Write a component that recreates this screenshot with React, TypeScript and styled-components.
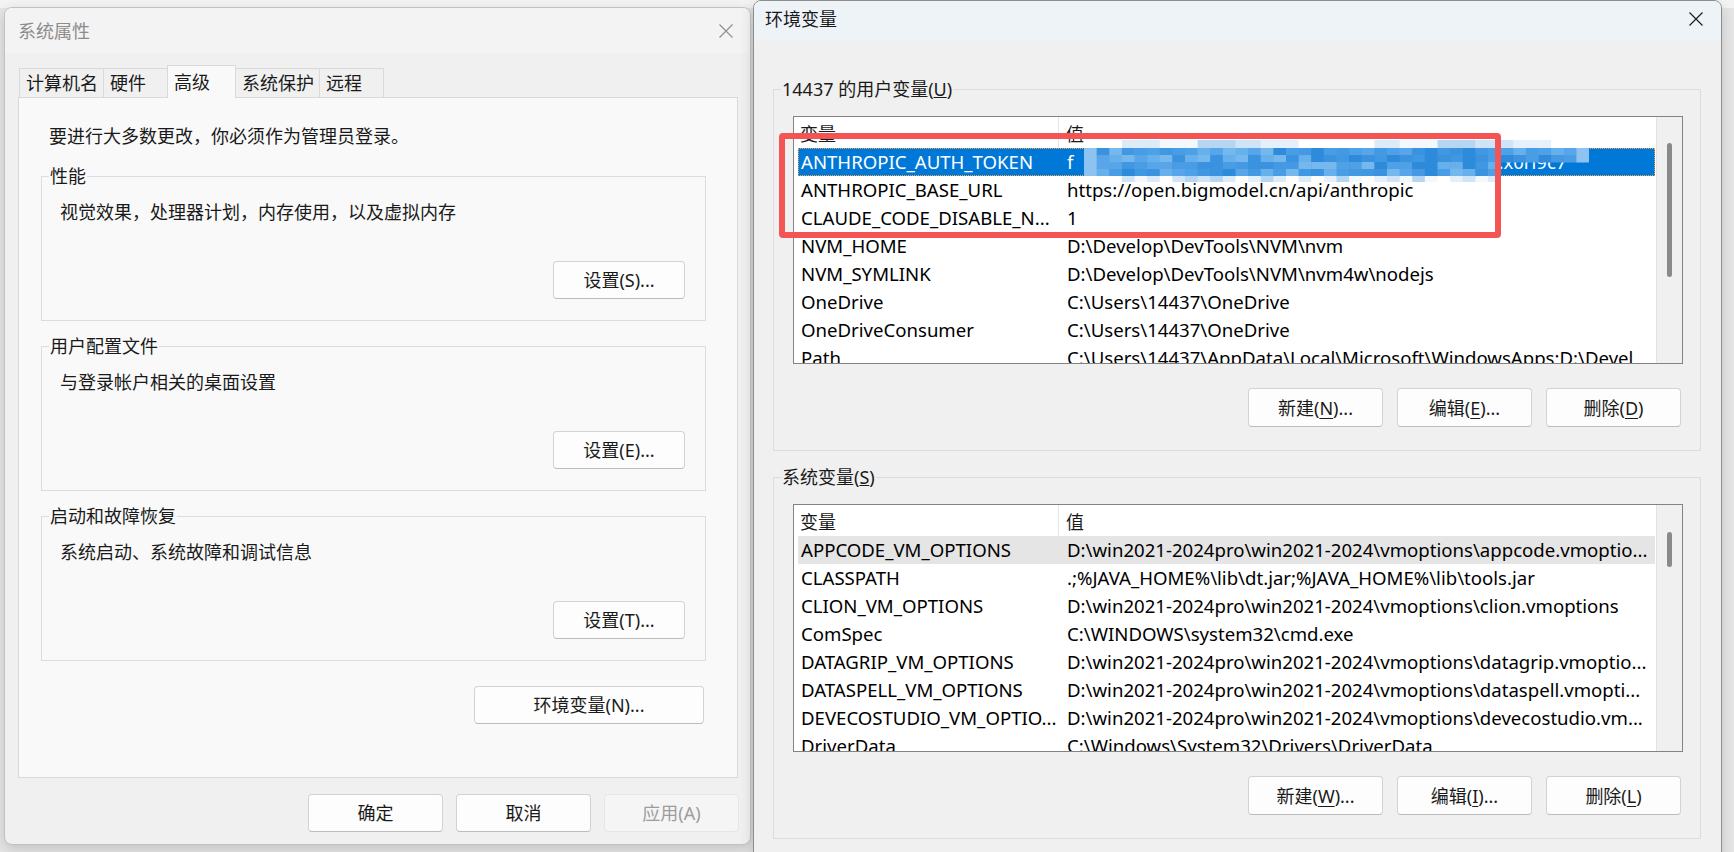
import React from 'react';
import styled, { createGlobalStyle } from 'styled-components';

type EnvVar = { name: string; value: React.ReactNode };

const GlobalStyle = createGlobalStyle`
  html, body {
    margin: 0;
    padding: 0;
  }
  body {
    width: 1734px;
    height: 852px;
    overflow: hidden;
    background: #e6e6e6;
    font-family: "Noto Sans", "Noto Sans CJK SC", sans-serif;
    font-size: 18px;
    color: #1a1a1a;
  }
`;

const Desktop = styled.div`
  display: flex;
  align-items: flex-start;
  gap: 2px;
  height: 852px;
  padding-left: 4px;
  box-sizing: border-box;
  background: linear-gradient(#f4f4f4 0, #f4f4f4 8px, #e6e6e6 8px);
`;

const Window = styled.div<{ $active?: boolean }>`
  box-sizing: border-box;
  display: flex;
  flex-direction: column;
  flex: none;
  background: #f0f0f0;
  border: 1px solid ${(p) => (p.$active ? '#8d8d8d' : '#c2c2c2')};
  overflow: hidden;
  box-shadow: 0 4px 14px rgba(0, 0, 0, 0.16);
`;

const SystemWindow = styled(Window)`
  width: 747px;
  height: 838px;
  margin-top: 7px;
  border-radius: 8px;
`;

const EnvWindow = styled(Window)`
  width: 969px;
  height: 900px;
  border-radius: 8px 8px 0 0;
`;

const TitleBar = styled.div<{ $active?: boolean }>`
  display: flex;
  align-items: center;
  justify-content: space-between;
  flex: none;
  box-sizing: border-box;
  height: ${(p) => (p.$active ? 40 : 45)}px;
  padding: ${(p) => (p.$active ? '0 0 5px 11px' : '0 0 0 13px')};
  background: ${(p) => (p.$active ? '#eef3f8' : '#f3f3f3')};
  color: ${(p) => (p.$active ? '#1a1a1a' : '#8c8c8c')};
  line-height: 24px;
`;

const CloseButton = styled.div<{ $active?: boolean }>`
  display: flex;
  align-items: center;
  justify-content: center;
  width: ${(p) => (p.$active ? 50 : 48)}px;
  height: 100%;
  color: ${(p) => (p.$active ? '#1c1c1c' : '#8f8f8f')};
`;

const SystemBody = styled.div`
  display: flex;
  flex-direction: column;
  padding: 12px 12px 0 13px;
`;

const TabStrip = styled.div`
  display: flex;
  align-items: flex-end;
  height: 32px;
  padding-left: 1px;
`;

const Tab = styled.div<{ $selected?: boolean }>`
  box-sizing: border-box;
  display: flex;
  align-items: center;
  min-width: ${(p) => (p.$selected ? 69 : 65)}px;
  height: ${(p) => (p.$selected ? 33 : 29)}px;
  margin-bottom: ${(p) => (p.$selected ? -1 : 0)}px;
  padding: 0 5px 0 6px;
  border: 1px solid #d9d9d9;
  border-bottom: none;
  background: ${(p) => (p.$selected ? '#f9f9f9' : '#f0f0f0')};
  position: relative;
  z-index: ${(p) => (p.$selected ? 2 : 1)};
  line-height: 24px;
  & + & {
    margin-left: -1px;
  }
`;

const TabPanel = styled.div`
  box-sizing: border-box;
  display: flex;
  flex-direction: column;
  height: 681px;
  border: 1px solid #d9d9d9;
  background: #f9f9f9;
  padding: 26px 31px 0 22px;
`;

const Intro = styled.div`
  padding-left: 8px;
  line-height: 24px;
`;

const GroupBox = styled.fieldset<{ $gap: number }>`
  margin: ${(p) => p.$gap}px 0 0;
  min-width: 0;
  border: 1px solid #dcdcdc;
  padding: 0 20px 21px 7px;
`;

const EnvGroupBox = styled(GroupBox)`
  padding: 0 17px 23px 7px;
`;

const Caption = styled.legend`
  padding: 0 1px;
  line-height: 24px;
`;

const GroupText = styled.div`
  margin-top: 12px;
  padding-left: 11px;
  line-height: 24px;
`;

const ButtonRow = styled.div<{ $gap?: number; $top: number; $right?: number }>`
  display: flex;
  justify-content: flex-end;
  gap: ${(p) => p.$gap ?? 0}px;
  margin-top: ${(p) => p.$top}px;
  padding-right: ${(p) => p.$right ?? 0}px;
`;

const PushButton = styled.button<{ $width: number; $height?: number }>`
  box-sizing: border-box;
  width: ${(p) => p.$width}px;
  height: ${(p) => p.$height ?? 38}px;
  padding: 0;
  border: 1px solid #d3d3d3;
  border-bottom-color: #bcbcbc;
  border-radius: 4px;
  background: #fdfdfd;
  font: inherit;
  line-height: 24px;
  color: #1a1a1a;

  &:disabled {
    background: #f5f5f5;
    border-color: #e6e6e6;
    color: #9d9d9d;
  }

  u {
    text-underline-offset: 3px;
  }
`;

const DialogFooter = styled.div`
  display: flex;
  justify-content: flex-end;
  gap: 13px;
  margin: 16px -1px 0 0;
`;

const EnvBody = styled.div`
  display: flex;
  flex-direction: column;
  padding: 36px 20px 0 19px;
`;

const ListFrame = styled.div`
  position: relative;
  display: flex;
  box-sizing: border-box;
  height: 248px;
  margin: 15px 0 0 12px;
  border: 1px solid #838383;
  background: #fff;
`;

const ListViewport = styled.div`
  flex: 1;
  min-width: 0;
  display: flex;
  flex-direction: column;
  overflow: hidden;
  padding: 0 1px 0 4px;
`;

const HeaderRow = styled.div`
  display: flex;
  flex: none;
  height: 31px;
  line-height: 24px;
`;

const HeaderCell = styled.div<{ $first?: boolean }>`
  box-sizing: border-box;
  display: flex;
  align-items: center;
  padding: 3px 0 0 ${(p) => (p.$first ? 2 : 7)}px;
  ${(p) => (p.$first ? 'width: 261px; flex: none; border-right: 1px solid #e5e5e5;' : 'flex: 1;')}
`;

const VarRow = styled.div<{ $state?: 'selected' | 'hover' }>`
  display: flex;
  flex: none;
  height: 28px;
  line-height: 28px;
  font-size: 18.6px;
  background: ${(p) =>
    p.$state === 'selected' ? '#0078d7' : p.$state === 'hover' ? '#e5e5e5' : 'transparent'};
  color: ${(p) => (p.$state === 'selected' ? '#ffffff' : '#000000')};
  outline: ${(p) => (p.$state === 'selected' ? '1px dotted #f7a440' : 'none')};
  outline-offset: -1px;
`;

const NameCell = styled.div`
  box-sizing: border-box;
  width: 261px;
  flex: none;
  padding-left: 3px;
  overflow: hidden;
  white-space: nowrap;
`;

const ValueCell = styled.div`
  flex: 1;
  min-width: 0;
  padding-left: 8px;
  overflow: hidden;
  white-space: nowrap;
`;

const HiddenChars = styled.span`
  display: inline-block;
  width: 425px;
`;

const ScrollTrack = styled.div`
  box-sizing: border-box;
  display: flex;
  flex-direction: column;
  align-items: center;
  width: 26px;
  flex: none;
  background: #f0f0f0;
  border-left: 1px solid #e2e2e2;
`;

const ScrollThumb = styled.div<{ $top: number; $height: number }>`
  width: 5px;
  margin-top: ${(p) => p.$top}px;
  height: ${(p) => p.$height}px;
  border-radius: 3px;
  background: #8a8a8a;
`;

const RedMark = styled.div`
  position: absolute;
  left: -15px;
  top: 16px;
  width: 722px;
  height: 105px;
  box-sizing: border-box;
  border: 6px solid #f35555;
  border-radius: 4px;
  pointer-events: none;
`;

const MosaicLayer = styled.svg`
  position: absolute;
  left: 290px;
  top: 23px;
`;

const CloseGlyph: React.FC = () => (
  <svg width="16" height="16" viewBox="0 0 16 16">
    <path d="M1.5 1.5 14.5 14.5M14.5 1.5 1.5 14.5" stroke="currentColor" strokeWidth="1.15" fill="none" />
  </svg>
);

const BAND = ['#3a93e0', '#4a9de5', '#58a6e9', '#3f97e2', '#66b0ec', '#2f8bdc', '#4fa1e7', '#75b8ee', '#4499e3'];
const EDGE = ['#ffffff', '#e4f0fb', '#cfe4f7', '#b5d6f3', '#f3f8fd', '#dcebf9', '#ffffff'];
const ROW_Y = [0, 8, 15, 22, 29, 36];
const ROW_H = [8, 7, 7, 7, 7, 6];

// pixelated cover over the token value
const Mosaic: React.FC = () => {
  const cols = 40;
  const w = 505;
  const h = 42;
  const cw = w / cols;
  const cells: React.ReactNode[] = [];
  for (let c = 0; c < cols; c++) {
    ROW_Y.forEach((y, r) => {
      if (c >= 33 && r >= 3) return;
      const n = (c * 7919 + r * 104729 + ((c * r * 31) % 17)) % 97;
      const inBand = r >= 1 && r <= 4;
      let fill = inBand ? BAND[n % BAND.length] : EDGE[n % EDGE.length];
      if (inBand && (c === 0 || c === cols - 1)) fill = '#8dc2f1';
      if (!inBand && (c < 2 || c > cols - 3)) fill = '#ffffff';
      cells.push(<rect key={`${c}-${r}`} x={c * cw} y={y} width={cw + 0.5} height={ROW_H[r] + 0.5} fill={fill} />);
    });
  }
  return (
    <MosaicLayer width={w} height={h} viewBox={`0 0 ${w} ${h}`}>
      <defs>
        <filter id="soft">
          <feGaussianBlur stdDeviation="0.7" />
        </filter>
      </defs>
      <g filter="url(#soft)">{cells}</g>
    </MosaicLayer>
  );
};

const userVars: EnvVar[] = [
  {
    name: 'ANTHROPIC_AUTH_TOKEN',
    value: (
      <>
        f<HiddenChars />.x0ri9c7
      </>
    ),
  },
  { name: 'ANTHROPIC_BASE_URL', value: 'https://open.bigmodel.cn/api/anthropic' },
  { name: 'CLAUDE_CODE_DISABLE_N...', value: '1' },
  { name: 'NVM_HOME', value: 'D:\\Develop\\DevTools\\NVM\\nvm' },
  { name: 'NVM_SYMLINK', value: 'D:\\Develop\\DevTools\\NVM\\nvm4w\\nodejs' },
  { name: 'OneDrive', value: 'C:\\Users\\14437\\OneDrive' },
  { name: 'OneDriveConsumer', value: 'C:\\Users\\14437\\OneDrive' },
  { name: 'Path', value: 'C:\\Users\\14437\\AppData\\Local\\Microsoft\\WindowsApps;D:\\Devel' },
];

const systemVars: EnvVar[] = [
  { name: 'APPCODE_VM_OPTIONS', value: 'D:\\win2021-2024pro\\win2021-2024\\vmoptions\\appcode.vmoptio...' },
  { name: 'CLASSPATH', value: '.;%JAVA_HOME%\\lib\\dt.jar;%JAVA_HOME%\\lib\\tools.jar' },
  { name: 'CLION_VM_OPTIONS', value: 'D:\\win2021-2024pro\\win2021-2024\\vmoptions\\clion.vmoptions' },
  { name: 'ComSpec', value: 'C:\\WINDOWS\\system32\\cmd.exe' },
  { name: 'DATAGRIP_VM_OPTIONS', value: 'D:\\win2021-2024pro\\win2021-2024\\vmoptions\\datagrip.vmoptio...' },
  { name: 'DATASPELL_VM_OPTIONS', value: 'D:\\win2021-2024pro\\win2021-2024\\vmoptions\\dataspell.vmopti...' },
  { name: 'DEVECOSTUDIO_VM_OPTIO...', value: 'D:\\win2021-2024pro\\win2021-2024\\vmoptions\\devecostudio.vm...' },
  { name: 'DriverData', value: 'C:\\Windows\\System32\\Drivers\\DriverData' },
];

type EnvListProps = {
  vars: EnvVar[];
  selected?: number;
  hover?: number;
  thumbTop: number;
  thumbHeight: number;
  children?: React.ReactNode;
};

const EnvList: React.FC<EnvListProps> = ({ vars, selected, hover, thumbTop, thumbHeight, children }) => (
  <ListFrame>
    <ListViewport>
      <HeaderRow>
        <HeaderCell $first>变量</HeaderCell>
        <HeaderCell>值</HeaderCell>
      </HeaderRow>
      {vars.map((v, i) => (
        <VarRow key={v.name} $state={i === selected ? 'selected' : i === hover ? 'hover' : undefined}>
          <NameCell>{v.name}</NameCell>
          <ValueCell>{v.value}</ValueCell>
        </VarRow>
      ))}
    </ListViewport>
    <ScrollTrack>
      <ScrollThumb $top={thumbTop} $height={thumbHeight} />
    </ScrollTrack>
    {children}
  </ListFrame>
);

const settingsGroups = [
  { title: '性能', text: '视觉效果，处理器计划，内存使用，以及虚拟内存', button: '设置(S)...', gap: 16 },
  { title: '用户配置文件', text: '与登录帐户相关的桌面设置', button: '设置(E)...', gap: 13 },
  { title: '启动和故障恢复', text: '系统启动、系统故障和调试信息', button: '设置(T)...', gap: 13 },
];

const tabs = ['计算机名', '硬件', '高级', '系统保护', '远程'];

const App: React.FC = () => (
  <>
    <GlobalStyle />
    <Desktop>
      <SystemWindow>
        <TitleBar>
          <span>系统属性</span>
          <CloseButton>
            <CloseGlyph />
          </CloseButton>
        </TitleBar>
        <SystemBody>
          <TabStrip>
            {tabs.map((t) => (
              <Tab key={t} $selected={t === '高级'}>
                {t}
              </Tab>
            ))}
          </TabStrip>
          <TabPanel>
            <Intro>要进行大多数更改，你必须作为管理员登录。</Intro>
            {settingsGroups.map((g) => (
              <GroupBox key={g.title} $gap={g.gap}>
                <Caption>{g.title}</Caption>
                <GroupText>{g.text}</GroupText>
                <ButtonRow $top={37}>
                  <PushButton $width={132}>{g.button}</PushButton>
                </ButtonRow>
              </GroupBox>
            ))}
            <ButtonRow $top={25} $right={2}>
              <PushButton $width={230}>环境变量(N)...</PushButton>
            </ButtonRow>
          </TabPanel>
          <DialogFooter>
            <PushButton $width={135}>确定</PushButton>
            <PushButton $width={135}>取消</PushButton>
            <PushButton $width={135} disabled>
              应用(A)
            </PushButton>
          </DialogFooter>
        </SystemBody>
      </SystemWindow>

      <EnvWindow $active>
        <TitleBar $active>
          <span>环境变量</span>
          <CloseButton $active>
            <CloseGlyph />
          </CloseButton>
        </TitleBar>
        <EnvBody>
          <EnvGroupBox $gap={0}>
            <Caption>
              14437 的用户变量(<u>U</u>)
            </Caption>
            <EnvList vars={userVars} selected={0} thumbTop={26} thumbHeight={134}>
              <Mosaic />
              <RedMark />
            </EnvList>
            <ButtonRow $top={24} $gap={14} $right={2}>
              <PushButton $width={135} $height={39}>
                新建(<u>N</u>)...
              </PushButton>
              <PushButton $width={135} $height={39}>
                编辑(<u>E</u>)...
              </PushButton>
              <PushButton $width={135} $height={39}>
                删除(<u>D</u>)
              </PushButton>
            </ButtonRow>
          </EnvGroupBox>
          <EnvGroupBox $gap={14}>
            <Caption>
              系统变量(<u>S</u>)
            </Caption>
            <EnvList vars={systemVars} hover={0} thumbTop={27} thumbHeight={35} />
            <ButtonRow $top={24} $gap={14} $right={2}>
              <PushButton $width={135} $height={39}>
                新建(<u>W</u>)...
              </PushButton>
              <PushButton $width={135} $height={39}>
                编辑(<u>I</u>)...
              </PushButton>
              <PushButton $width={135} $height={39}>
                删除(<u>L</u>)
              </PushButton>
            </ButtonRow>
          </EnvGroupBox>
        </EnvBody>
      </EnvWindow>
    </Desktop>
  </>
);

export default App;
